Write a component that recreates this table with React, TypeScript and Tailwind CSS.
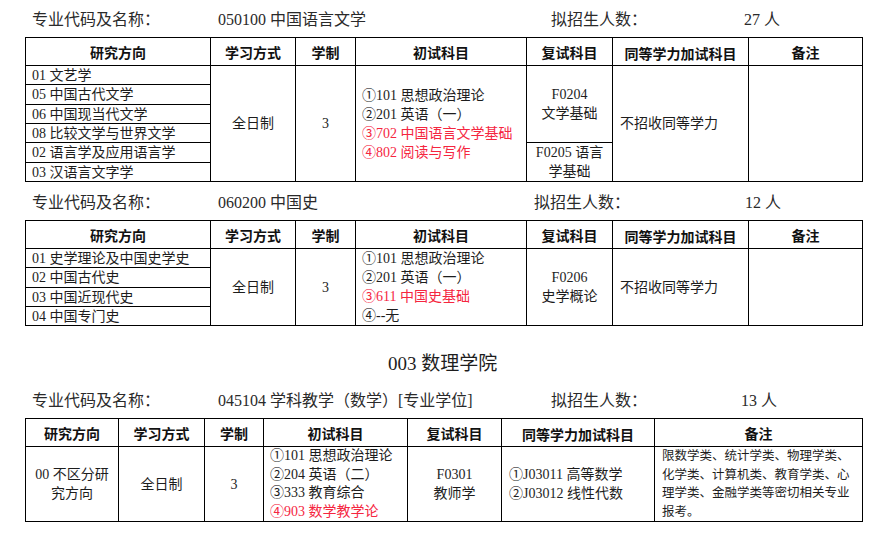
import React from "react";

const serif = "font-['Liberation_Serif','Noto_Sans_CJK_SC',serif]";
const RED = "text-[#f5263f]";

function Title({
  name,
  count,
  valueW,
  countLabelW,
  pt,
  h,
}: {
  name: string;
  count: string;
  valueW: string;
  countLabelW: string;
  pt: string;
  h: string;
}) {
  return (
    <div className={`flex ${h} ${pt} pl-[7px] text-[16px] leading-[22px] text-[#2a2a2a] ${serif}`}>
      <span className="w-[186px] shrink-0">专业代码及名称：</span>
      <span className={`${valueW} shrink-0`}>{name}</span>
      <span className={`${countLabelW} shrink-0`}>拟招生人数：</span>
      <span>{count}</span>
    </div>
  );
}

const th =
  "border border-black font-['Noto_Sans_CJK_SC',sans-serif] font-bold text-[14px] leading-[18px] text-[#111] text-center align-middle p-0";
const td = `border border-black text-[14px] leading-[19px] text-[#1d1d1d] p-0 align-middle ${serif}`;
const tdDir = `border border-black text-[14px] leading-[17px] text-[#1d1d1d] p-0 pl-[6px] whitespace-nowrap align-middle ${serif}`;

function Header() {
  return (
    <tr className="h-[28px]">
      <th className={th}>研究方向</th>
      <th className={th}>学习方式</th>
      <th className={th}>学制</th>
      <th className={th}>初试科目</th>
      <th className={th}>复试科目</th>
      <th className={`${th} pt-[3px]`}>同等学力加试科目</th>
      <th className={th}>备注</th>
    </tr>
  );
}

function Cols({ w }: { w: number[] }) {
  return (
    <colgroup>
      {w.map((x, i) => (
        <col key={i} style={{ width: x }} />
      ))}
    </colgroup>
  );
}

export default function App() {
  const w1 = [185, 85, 60, 171, 86, 136, 114];
  const w3 = [93, 86, 59, 144, 94, 153, 208];
  const dirs1 = [
    ["01 文艺学", "h-[19px]"],
    ["05 中国古代文学", "h-[20px]"],
    ["06 中国现当代文学", "h-[19px]"],
    ["08 比较文学与世界文学", "h-[19px]"],
    ["02 语言学及应用语言学", "h-[20px]"],
    ["03 汉语言文字学", "h-[19px]"],
  ];
  const dirs2 = [
    ["01 史学理论及中国史学史", "h-[19px]"],
    ["02 中国古代史", "h-[20px]"],
    ["03 中国近现代史", "h-[19px]"],
    ["04 中国专门史", "h-[19px]"],
  ];
  return (
    <div className="w-[884px] h-[536px] bg-white overflow-hidden">
      <div className="pl-[25px] w-[862px]">
        <Title
          name="050100 中国语言文学"
          count="27 人"
          valueW="w-[333px]"
          countLabelW="w-[193px]"
          pt="pt-[9px]"
          h="h-[37px]"
        />
        <table className="border-collapse table-fixed w-[837px]">
          <Cols w={w1} />
          <tbody>
            <Header />
            {dirs1.map(([t, h], i) => (
              <tr key={i} className={h}>
                <td className={tdDir}>{t}</td>
                {i === 0 && (
                  <>
                    <td rowSpan={6} className={`${td} text-center`}>全日制</td>
                    <td rowSpan={6} className={`${td} text-center`}>3</td>
                    <td rowSpan={6} className={`${td} pl-[6px] whitespace-nowrap`}>
                      <div>①101 思想政治理论</div>
                      <div>②201 英语（一）</div>
                      <div className={RED}>③702 中国语言文学基础</div>
                      <div className={RED}>④802 阅读与写作</div>
                    </td>
                    <td rowSpan={4} className={`${td} text-center`}>
                      <div>F0204</div>
                      <div>文学基础</div>
                    </td>
                    <td rowSpan={6} className={`${td} pl-[7px]`}>不招收同等学力</td>
                    <td rowSpan={6} className={td}></td>
                  </>
                )}
                {i === 4 && (
                  <td rowSpan={2} className={`${td} text-center`}>
                    <div>F0205 语言</div>
                    <div>学基础</div>
                  </td>
                )}
              </tr>
            ))}
          </tbody>
        </table>

        <Title
          name="060200 中国史"
          count="12 人"
          valueW="w-[316px]"
          countLabelW="w-[211px]"
          pt="pt-[10px]"
          h="h-[38px]"
        />
        <table className="border-collapse table-fixed w-[837px]">
          <Cols w={w1} />
          <tbody>
            <Header />
            {dirs2.map(([t, h], i) => (
              <tr key={i} className={h}>
                <td className={tdDir}>{t}</td>
                {i === 0 && (
                  <>
                    <td rowSpan={4} className={`${td} text-center`}>全日制</td>
                    <td rowSpan={4} className={`${td} text-center`}>3</td>
                    <td rowSpan={4} className={`${td} pl-[6px] whitespace-nowrap`}>
                      <div>①101 思想政治理论</div>
                      <div>②201 英语（一）</div>
                      <div className={RED}>③611 中国史基础</div>
                      <div>④--无</div>
                    </td>
                    <td rowSpan={4} className={`${td} text-center`}>
                      <div>F0206</div>
                      <div>史学概论</div>
                    </td>
                    <td rowSpan={4} className={`${td} pl-[7px]`}>不招收同等学力</td>
                    <td rowSpan={4} className={td}></td>
                  </>
                )}
              </tr>
            ))}
          </tbody>
        </table>

        <div className={`h-[57px] pt-[26px] pl-[363px] text-[19px] leading-[24px] text-[#1d1d1d] ${serif}`}>
          003 数理学院
        </div>

        <Title
          name="045104 学科教学（数学）[专业学位]"
          count="13 人"
          valueW="w-[333px]"
          countLabelW="w-[190px]"
          pt="pt-[7px]"
          h="h-[35px]"
        />
        <table className="border-collapse table-fixed w-[837px]">
          <Cols w={w3} />
          <tbody>
            <Header />
            <tr className="h-[75px]">
              <td className={`${td} text-center`}>
                <div>00 不区分研</div>
                <div>究方向</div>
              </td>
              <td className={`${td} text-center`}>全日制</td>
              <td className={`${td} text-center`}>3</td>
              <td className={`${td} pl-[6px] whitespace-nowrap`}>
                <div className="leading-[18.5px]">①101 思想政治理论</div>
                <div className="leading-[18.5px]">②204 英语（二）</div>
                <div className="leading-[18.5px]">③333 教育综合</div>
                <div className={`leading-[18.5px] ${RED}`}>④903 数学教学论</div>
              </td>
              <td className={`${td} text-center`}>
                <div>F0301</div>
                <div>教师学</div>
              </td>
              <td className={`${td} pl-[7px] whitespace-nowrap`}>
                <div>①J03011 高等数学</div>
                <div>②J03012 线性代数</div>
              </td>
              <td className={`${td} pl-[7px] pr-[2px]`}>
                <div className="text-[12.5px] leading-[18.5px]">
                  限数学类、统计学类、物理学类、化学类、计算机类、教育学类、心理学类、金融学类等密切相关专业报考。
                </div>
              </td>
            </tr>
          </tbody>
        </table>
      </div>
    </div>
  );
}
